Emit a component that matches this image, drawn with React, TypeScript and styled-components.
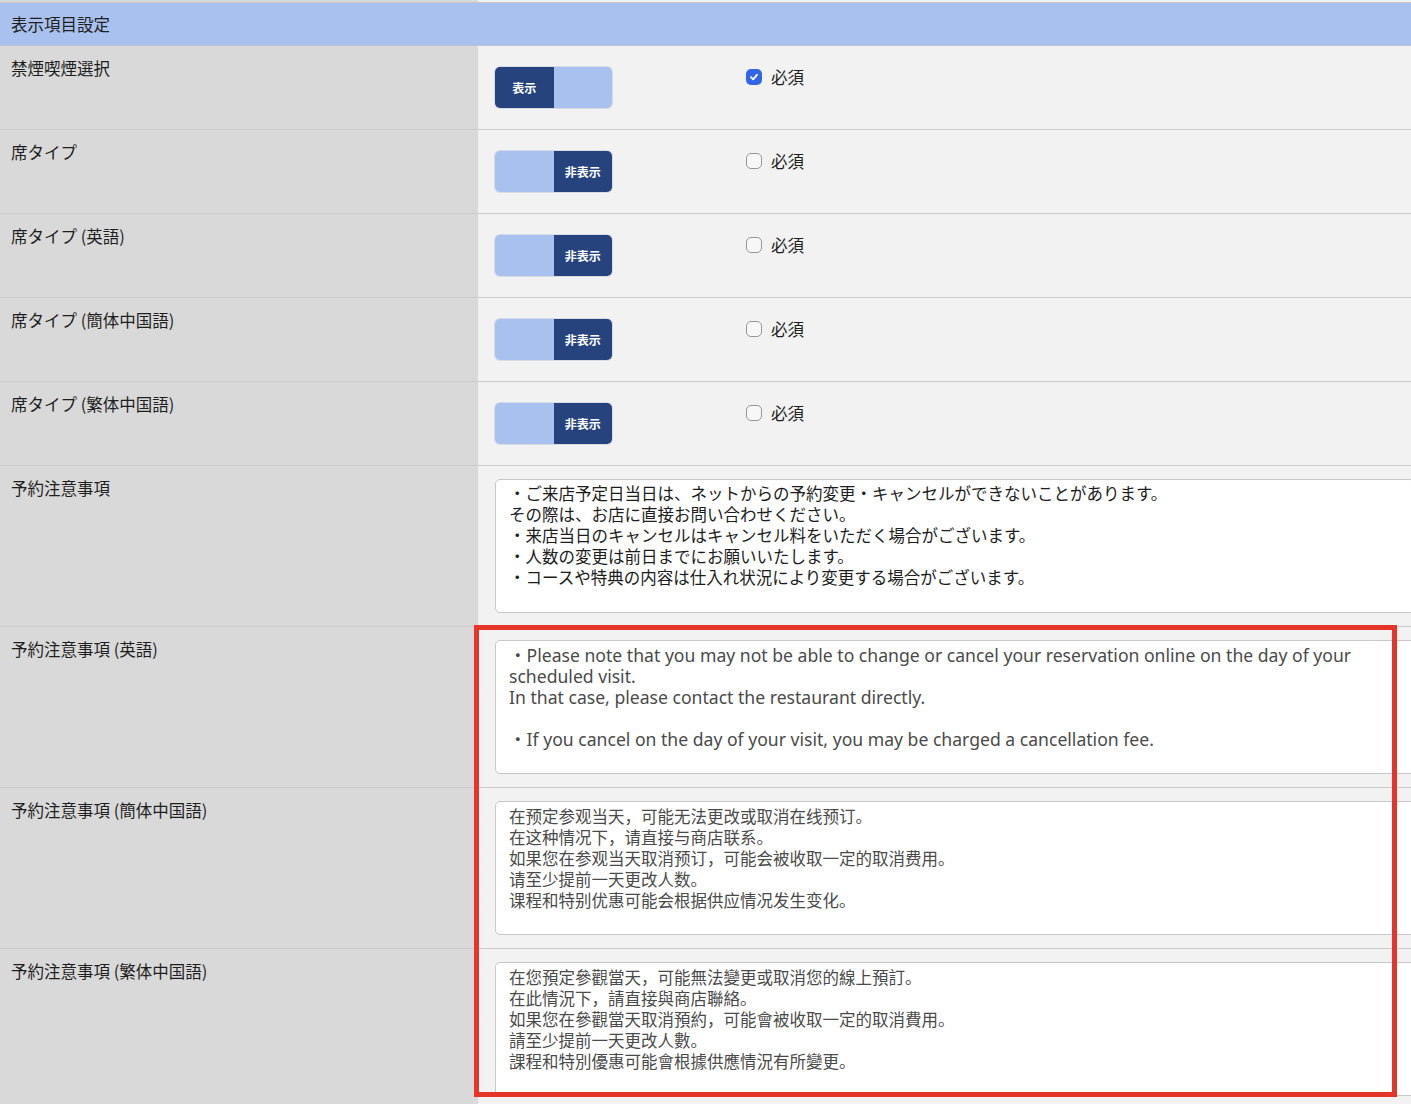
import styled, { createGlobalStyle } from "styled-components";

const GlobalStyle = createGlobalStyle`
    html, body {
        margin: 0;
        padding: 0;
        background: #f2f2f2;
    }

    #root {
        position: relative;
        height: 1104px;
        overflow: hidden;
        font-family: "Noto Sans CJK JP", "Liberation Sans", sans-serif;
        color: #222;
    }
`;

const PageLayout = styled.div`
    display: flex;
    flex-direction: column;
    width: 100%;
`;

const TopStrip = styled.div`
    display: grid;
    grid-template-columns: 478px 1fr;
    height: 2px;
    border-bottom: 1px solid #c6c6c6;

    & > div:first-child {
        background: #d9d9d9;
    }
`;

const SectionHeader = styled.div`
    display: flex;
    align-items: center;
    height: 42px;
    padding-left: 11px;
    background: #a9c1ee;
    border-bottom: 1px solid #b9c3d6;
    font-size: 16.5px;
    color: #1f1f1f;
`;

const Row = styled.div`
    display: grid;
    grid-template-columns: 478px 1fr;
    border-bottom: 1px solid #cbcbcb;
`;

const LabelCell = styled.div`
    background: #d9d9d9;
    padding: 12px 11px;
    font-size: 16.5px;
    line-height: 21px;
    color: #1f1f1f;
`;

const ValueCell = styled.div`
    background: #f2f2f2;
    padding: 21px 0 21px 17px;
    display: grid;
    grid-template-columns: 251px auto;
    align-items: start;
`;

const TextCell = styled.div`
    background: #f2f2f2;
    padding: 13px 0 13px 17px;
`;

const Toggle = styled.div`
    display: flex;
    width: 117px;
    height: 41px;
    border-radius: 5px;
    overflow: hidden;
    box-shadow: 0 0 0 1px rgba(60, 90, 160, 0.15);
`;

const ToggleHalf = styled.div<{ $active: boolean }>`
    flex: 1;
    display: flex;
    align-items: center;
    justify-content: center;
    background: ${(p) => (p.$active ? "#26437e" : "#a9c1ee")};
    color: #fff;
    font-size: 12px;
    font-weight: 700;
`;

const RequiredLabel = styled.label`
    display: flex;
    align-items: center;
    gap: 9px;
    height: 19px;
    font-size: 16.5px;
    color: #1f1f1f;
`;

const CheckBox = styled.span<{ $checked: boolean }>`
    display: inline-flex;
    align-items: center;
    justify-content: center;
    box-sizing: border-box;
    width: 16px;
    height: 16px;
    border-radius: 5px;
    background: ${(p) => (p.$checked ? "#3366e6" : "#f7f7f7")};
    border: ${(p) => (p.$checked ? "none" : "1px solid #969696")};
`;

const NoteArea = styled.textarea<{ $lang: "ja" | "en" | "sc" | "tc" }>`
    display: block;
    box-sizing: border-box;
    width: 920px;
    height: 134px;
    margin: 0;
    padding: ${(p) => (p.$lang === "ja" ? "3px" : "4px")} 13px 4px;
    border: 1px solid #c8c8c8;
    border-radius: 5px;
    background: #fff;
    resize: none;
    overflow: hidden;
    font-size: ${(p) => (p.$lang === "en" ? "17.6px" : "16.5px")};
    line-height: 21px;
    color: ${(p) => (p.$lang === "ja" ? "#1d1d1d" : "#4a4a4a")};
    font-family: ${(p) =>
        p.$lang === "en"
            ? `"Noto Sans", "Noto Sans CJK JP", sans-serif`
            : p.$lang === "ja"
            ? `"Noto Sans CJK JP", sans-serif`
            : `"Noto Sans CJK SC", sans-serif`};
`;

const Highlight = styled.div`
    position: absolute;
    left: 474px;
    top: 625px;
    width: 923px;
    height: 472px;
    box-sizing: border-box;
    border: 5px solid #e5352a;
    pointer-events: none;
`;

const toggleRows = [
    { label: "禁煙喫煙選択", shown: true, required: true },
    { label: "席タイプ", shown: false, required: false },
    { label: "席タイプ (英語)", shown: false, required: false },
    { label: "席タイプ (簡体中国語)", shown: false, required: false },
    { label: "席タイプ (繁体中国語)", shown: false, required: false },
];

const notes: { label: string; lang: "ja" | "en" | "sc" | "tc"; text: string }[] = [
    {
        label: "予約注意事項",
        lang: "ja",
        text:
            "・ご来店予定日当日は、ネットからの予約変更・キャンセルができないことがあります。\n" +
            "その際は、お店に直接お問い合わせください。\n" +
            "・来店当日のキャンセルはキャンセル料をいただく場合がございます。\n" +
            "・人数の変更は前日までにお願いいたします。\n" +
            "・コースや特典の内容は仕入れ状況により変更する場合がございます。",
    },
    {
        label: "予約注意事項 (英語)",
        lang: "en",
        text:
            "・Please note that you may not be able to change or cancel your reservation online on the day of your scheduled visit.\n" +
            "In that case, please contact the restaurant directly.\n\n" +
            "・If you cancel on the day of your visit, you may be charged a cancellation fee.\n\n" +
            "・Please notify us of any changes to the number of guests by the day before.\n\n" +
            "・Courses and special offers may change depending on availability.",
    },
    {
        label: "予約注意事項 (簡体中国語)",
        lang: "sc",
        text:
            "在预定参观当天，可能无法更改或取消在线预订。\n" +
            "在这种情况下，请直接与商店联系。\n" +
            "如果您在参观当天取消预订，可能会被收取一定的取消费用。\n" +
            "请至少提前一天更改人数。\n" +
            "课程和特别优惠可能会根据供应情况发生变化。",
    },
    {
        label: "予約注意事項 (繁体中国語)",
        lang: "tc",
        text:
            "在您預定參觀當天，可能無法變更或取消您的線上預訂。\n" +
            "在此情況下，請直接與商店聯絡。\n" +
            "如果您在參觀當天取消預約，可能會被收取一定的取消費用。\n" +
            "請至少提前一天更改人數。\n" +
            "課程和特別優惠可能會根據供應情況有所變更。",
    },
];

function CheckMark() {
    return (
        <svg width="10" height="10" viewBox="0 0 10 10">
            <path d="M2 5.2 L4.2 7.3 L8 2.8" fill="none" stroke="#fff" strokeWidth="1.8" strokeLinecap="round" strokeLinejoin="round" />
        </svg>
    );
}

function App() {
    return (
        <>
            <GlobalStyle />
            <PageLayout>
                <TopStrip>
                    <div />
                    <div />
                </TopStrip>
                <SectionHeader>表示項目設定</SectionHeader>
                {toggleRows.map((row) => (
                    <Row key={row.label}>
                        <LabelCell>{row.label}</LabelCell>
                        <ValueCell>
                            <Toggle>
                                <ToggleHalf $active={row.shown}>{row.shown ? "表示" : ""}</ToggleHalf>
                                <ToggleHalf $active={!row.shown}>{row.shown ? "" : "非表示"}</ToggleHalf>
                            </Toggle>
                            <RequiredLabel>
                                <CheckBox $checked={row.required}>{row.required && <CheckMark />}</CheckBox>
                                必須
                            </RequiredLabel>
                        </ValueCell>
                    </Row>
                ))}
                {notes.map((note) => (
                    <Row key={note.label}>
                        <LabelCell>{note.label}</LabelCell>
                        <TextCell>
                            <NoteArea $lang={note.lang} readOnly defaultValue={note.text} />
                        </TextCell>
                    </Row>
                ))}
            </PageLayout>
            <Highlight />
        </>
    );
}

export default App;
